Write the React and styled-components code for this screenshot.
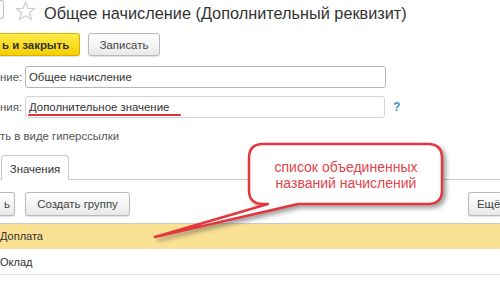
import React from "react";
import styled, { createGlobalStyle } from "styled-components";

const Global = createGlobalStyle`
  html, body { margin: 0; padding: 0; background: #fff; }
  body { font-family: "Liberation Sans", Arial, sans-serif; color: #333; }
`;

const Page = styled.div`
  position: relative;
  width: 500px;
  height: 300px;
  overflow: hidden;
  background: #fff;
`;

const TitleRow = styled.div`
  display: flex;
  align-items: flex-start;
  height: 33px;
`;

const EdgeBox = styled.div`
  width: 3px;
  height: 17px;
  border: 1px solid #bdbdbd;
  border-left: none;
  border-radius: 0 3px 3px 0;
  background: #fafafa;
`;

const StarIcon = styled.svg`
  margin-left: 11px;
  margin-top: 1px;
  width: 21px;
  height: 20px;
`;

const Title = styled.h1`
  margin: 0 0 0 8px;
  font-weight: normal;
  font-size: 16.3px;
  line-height: 22px;
  padding-top: 2px;
  color: #333;
  white-space: nowrap;
`;

const Toolbar = styled.div`
  display: flex;
  align-items: center;
  gap: ${(p) => p.$gap || 8}px;
  height: 23px;
  justify-content: ${(p) => (p.$spread ? "space-between" : "flex-start")};
`;

const Button = styled.div`
  box-sizing: border-box;
  height: ${(p) => p.$h || 23}px;
  width: ${(p) => p.$w}px;
  display: flex;
  align-items: center;
  justify-content: ${(p) => (p.$pad != null ? "flex-start" : "center")};
  padding-left: ${(p) => p.$pad || 0}px;
  font-size: 11.4px;
  color: #444;
  border: 1px solid #b9b9b9;
  border-radius: 3px;
  background: linear-gradient(#ffffff, #e9e9e9);
  box-shadow: 0 1px 1px rgba(0,0,0,0.12);
  white-space: nowrap;
  overflow: hidden;
  ${(p) => p.$cutLeft && `border-left: none; border-top-left-radius: 0; border-bottom-left-radius: 0;`}
  ${(p) => p.$cutRight && `border-right: none; border-top-right-radius: 0; border-bottom-right-radius: 0;`}
`;

const PrimaryButton = styled(Button)`
  background: linear-gradient(#ffec4a, #f4cf00);
  border-color: #d4b400;
  color: #333;
  font-weight: bold;
`;

const Form = styled.div`
  display: flex;
  flex-direction: column;
  gap: 8px;
  margin-top: 10px;
`;

const FieldRow = styled.div`
  display: flex;
  align-items: center;
  height: 22px;
`;

const Label = styled.div`
  width: 25px;
  font-size: 11.4px;
  color: #555;
  white-space: nowrap;
`;

const Input = styled.div`
  position: relative;
  box-sizing: border-box;
  width: ${(p) => p.$w}px;
  height: 22px;
  border: 1px solid ${(p) => p.$c || "#b5b5b5"};
  border-radius: 3px;
  padding-left: 3px;
  display: flex;
  align-items: center;
  font-size: 11.4px;
  color: #333;
  background: #fff;
`;

const Underline = styled.div`
  position: absolute;
  left: 2px;
  top: 17px;
  width: 153px;
  height: 2px;
  background: #e03434;
  border-radius: 1px;
`;

const Help = styled.span`
  margin-left: 8px;
  font-size: 12px;
  font-weight: bold;
  color: #3d8fd0;
`;

const CheckText = styled.div`
  margin-top: 12px;
  height: 16px;
  font-size: 11.4px;
  color: #555;
  white-space: nowrap;
`;

const TabStrip = styled.div`
  margin-top: 9px;
  display: flex;
  align-items: flex-end;
  height: 24px;
  border-bottom: 1px solid #c8c8c8;
`;

const Tab = styled.div`
  box-sizing: border-box;
  margin-left: 1px;
  margin-bottom: -1px;
  width: 68px;
  height: 25px;
  border: 1px solid #c8c8c8;
  border-bottom: 1px solid #fff;
  border-radius: 4px 4px 0 0;
  background: #fff;
  font-size: 11.4px;
  color: #333;
  display: flex;
  align-items: center;
  justify-content: center;
  padding-top: 2px;
`;

const ListToolbar = styled(Toolbar)`
  margin-top: 12px;
  height: 24px;
`;

const Table = styled.div`
  margin-top: 7px;
  border-top: 1px solid #c9c9c9;
`;

const Row = styled.div`
  height: ${(p) => (p.$selected ? 24 : 25)}px;
  display: flex;
  align-items: center;
  font-size: 11px;
  color: #333;
  background: ${(p) => (p.$selected ? "#fbe193" : "#fff")};
  border-bottom: 1px solid ${(p) => (p.$selected ? "#f4dba0" : "#e2e2e2")};
`;

const Overlay = styled.svg`
  position: absolute;
  left: 0;
  top: 0;
  width: 500px;
  height: 300px;
  pointer-events: none;
`;

const CalloutText = styled.div`
  position: absolute;
  left: 248px;
  top: 159px;
  width: 196px;
  text-align: center;
  font-size: 14px;
  line-height: 16px;
  color: #e2454a;
`;

export default function App() {
  return (
    <Page>
      <Global />
      <TitleRow>
        <EdgeBox />
        <StarIcon viewBox="0 0 20 19">
          <polygon
            points="10,1 12.4,7 18.8,7.2 13.8,11.2 15.6,17.6 10,14 4.4,17.6 6.2,11.2 1.2,7.2 7.6,7"
            fill="none"
            stroke="#cdcdcd"
            strokeWidth="1.1"
            strokeLinejoin="round"
          />
        </StarIcon>
        <Title>Общее начисление (Дополнительный реквизит)</Title>
      </TitleRow>

      <Toolbar $gap={8}>
        <PrimaryButton $w={80} $pad={2} $cutLeft>ь и закрыть</PrimaryButton>
        <Button $w={72}>Записать</Button>
      </Toolbar>

      <Form>
        <FieldRow>
          <Label>ние:</Label>
          <Input $w={361}>Общее начисление</Input>
        </FieldRow>
        <FieldRow>
          <Label>ния:</Label>
          <Input $w={360} $c="#d6d6d6">
            Дополнительное значение
            <Underline />
          </Input>
          <Help>?</Help>
        </FieldRow>
      </Form>

      <CheckText>ть в виде гиперссылки</CheckText>

      <TabStrip>
        <Tab>Значения</Tab>
      </TabStrip>

      <ListToolbar $spread>
        <Toolbar $gap={10}>
          <Button $w={15} $h={24} $cutLeft>ь</Button>
          <Button $w={105} $h={24}>Создать группу</Button>
        </Toolbar>
        <Button $w={32} $h={24} $cutRight $pad={8}>Ещё</Button>
      </ListToolbar>

      <Table>
        <Row $selected>Доплата</Row>
        <Row>Оклад</Row>
      </Table>

      <Overlay viewBox="0 0 500 300">
        <defs>
          <filter id="sh" x="-10%" y="-10%" width="130%" height="140%">
            <feDropShadow dx="3" dy="3" stdDeviation="2" floodColor="#555" floodOpacity="0.55" />
          </filter>
        </defs>
        <path
          d="M 263 144 H 428 Q 442 144 442 158 V 190 Q 442 204 428 204 H 298 L 155 237 L 268 204 H 263 Q 249 204 249 190 V 158 Q 249 144 263 144 Z"
          fill="#fff"
          stroke="#e2393d"
          strokeWidth="2.5"
          strokeLinejoin="round"
          filter="url(#sh)"
        />
      </Overlay>
      <CalloutText>
        список объединенных
        <br />
        названий начислений
      </CalloutText>
    </Page>
  );
}
